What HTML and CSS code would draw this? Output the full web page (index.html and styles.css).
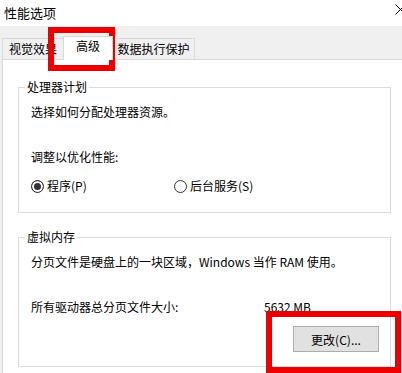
FILE: index.html
```html
<!DOCTYPE html>
<html>
<head>
    <title>性能选项</title>
    <link rel="stylesheet" href="styles.css">
</head>
<body>
    <div class="window">
        <div class="titlebar">
            <span class="title">性能选项</span>
            <svg class="close" width="11" height="11" viewBox="0 0 11 11">
                <path d="M0.5 0.5 L10.5 10.5 M10.5 0.5 L0.5 10.5" stroke="#000" stroke-width="1"/>
            </svg>
        </div>
        <div class="tabs">
            <div class="tab tab-visual">视觉效果</div>
            <div class="tab tab-adv active">高级</div>
            <div class="tab tab-dep">数据执行保护</div>
        </div>
        <div class="panel">
            <fieldset class="group">
                <legend>处理器计划</legend>
                <p class="row">选择如何分配处理器资源。</p>
                <p class="row gap">调整以优化性能:</p>
                <div class="row radios">
                    <label class="radio first"><span class="dot checked"></span>程序(P)</label>
                    <label class="radio"><span class="dot"></span>后台服务(S)</label>
                </div>
            </fieldset>
            <fieldset class="group mem">
                <legend>虚拟内存</legend>
                <p class="row">分页文件是硬盘上的一块区域，Windows 当作 RAM 使用。</p>
                <div class="row gap size">
                    <span class="size-label">所有驱动器总分页文件大小:</span>
                    <span>5632 MB</span>
                </div>
                <div class="actions">
                    <button type="button" class="btn">更改(C)...</button>
                </div>
            </fieldset>
        </div>
        <div class="mark mark-tab"></div>
        <div class="mark mark-btn"></div>
    </div>
</body>
</html>
```

FILE: styles.css
```css
html, body {
    margin: 0;
    overflow: hidden;
}
body {
    background-color: #f0f0f0;
    font-family: "Noto Sans CJK SC", "Microsoft YaHei", sans-serif;
    font-size: 12px;
    color: #000;
}
.window {
    position: relative;
    width: 402px;
    height: 373px;
    overflow: hidden;
}
.titlebar {
    height: 26px;
    background-color: #fff;
    display: flex;
    justify-content: space-between;
    align-items: flex-start;
    box-sizing: border-box;
    padding: 5px 0 0 4px;
}
.title {
    font-size: 13px;
    line-height: 16px;
}
.close {
    margin-top: -1px;
    margin-right: -4px;
}
.tabs {
    height: 33px;
    display: flex;
    align-items: flex-end;
    padding-left: 2px;
}
.tab {
    height: 21px;
    line-height: 20px;
    box-sizing: border-box;
    border: 1px solid #d9d9d9;
    border-bottom: none;
    background-color: #f0f0f0;
    text-align: center;
}
.tab-visual {
    width: 62px;
}
.tab-adv {
    width: 50px;
    margin-left: -1px;
}
.tab-dep {
    width: 83px;
    margin-left: -1px;
}
.tab.active {
    height: 24px;
    line-height: 18px;
    margin-bottom: -1px;
    background-color: #fff;
    position: relative;
    z-index: 1;
}
.panel {
    margin-left: 2px;
    height: 320px;
    background-color: #fff;
    border-top: 1px solid #d9d9d9;
    border-left: 1px solid #d9d9d9;
    padding: 19px 0 0 15px;
}
.group {
    width: 373px;
    box-sizing: border-box;
    margin: 0;
    border: 1px solid #dcdcdc;
    padding: 9px 11px 18px 12px;
}
.group legend {
    margin-left: -6px;
    padding: 0 2px;
    line-height: 16px;
}
.group.mem {
    margin-top: 16px;
    padding-bottom: 14px;
}
.row {
    margin: 0;
    line-height: 16px;
    height: 16px;
}
.row.gap {
    margin-top: 29px;
}
.radios {
    display: flex;
    margin-top: 13px;
}
.radio {
    display: flex;
    align-items: center;
}
.radio.first {
    width: 143px;
}
.dot {
    width: 11px;
    height: 11px;
    border: 1px solid #333;
    border-radius: 50%;
    margin-right: 3px;
    background-color: #fff;
}
.dot.checked {
    background-color: #333;
    box-shadow: inset 0 0 0 2px #fff;
}
.size {
    display: flex;
}
.size-label {
    width: 233px;
}
.actions {
    display: flex;
    justify-content: flex-end;
    margin-top: 11px;
}
.btn {
    width: 86px;
    height: 26px;
    background-color: #e1e1e1;
    border: 1px solid #adadad;
    font-family: "Noto Sans CJK SC", "Microsoft YaHei", sans-serif;
    font-size: 12px;
    color: #000;
    padding: 0;
}
.mark {
    position: absolute;
    border: 6px solid #ee0000;
    box-sizing: border-box;
}
.mark-tab {
    left: 48px;
    top: 27px;
    width: 67px;
    height: 44px;
}
.mark-btn {
    left: 266px;
    top: 311px;
    width: 135px;
    height: 62px;
}
```
